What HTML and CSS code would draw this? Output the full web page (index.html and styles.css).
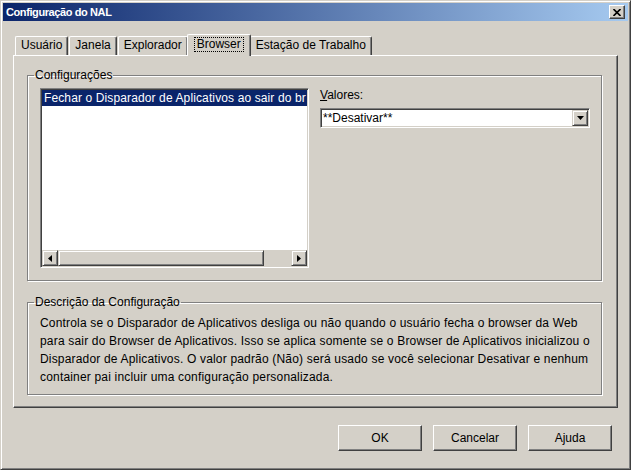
FILE: index.html
```html
<!DOCTYPE html>
<html lang="pt">
<head>
  <meta charset="UTF-8">
  <title>Configuração do NAL</title>
  <link rel="stylesheet" href="styles.css">
</head>
<body>
  <div class="window">
    <div class="titlebar">
      <span class="title">Configuração do NAL</span>
      <span class="close">
        <svg width="8" height="7" viewBox="0 0 8 7"><path d="M0.5 0 L7.5 7 M7.5 0 L0.5 7" stroke="#000" stroke-width="1.6"/></svg>
      </span>
    </div>

    <div class="content">
      <div class="tabs">
        <div class="tab">Usuário</div>
        <div class="tab">Janela</div>
        <div class="tab">Explorador</div>
        <div class="tab active"><span class="focus">Browser</span></div>
        <div class="tab">Estação de Trabalho</div>
      </div>

      <div class="panel">
        <fieldset class="group settings">
          <legend>Configurações</legend>
          <div class="settings-body">
            <div class="listbox">
              <div class="list-items">
                <div class="item selected">Fechar o Disparador de Aplicativos ao sair do br</div>
              </div>
              <div class="hscroll">
                <span class="sbtn">
                  <svg width="4" height="7" viewBox="0 0 4 7"><path d="M4 0 L0 3.5 L4 7 Z" fill="#000"/></svg>
                </span>
                <span class="thumb"></span>
                <span class="track"></span>
                <span class="sbtn">
                  <svg width="4" height="7" viewBox="0 0 4 7"><path d="M0 0 L4 3.5 L0 7 Z" fill="#000"/></svg>
                </span>
              </div>
            </div>

            <div class="values">
              <label class="values-label">Valores:</label>
              <div class="combo">
                <span class="combo-text">**Desativar**</span>
                <span class="drop">
                  <svg width="7" height="4" viewBox="0 0 7 4"><path d="M0 0 L7 0 L3.5 4 Z" fill="#000"/></svg>
                </span>
              </div>
            </div>
          </div>
        </fieldset>

        <fieldset class="group desc">
          <legend>Descrição da Configuração</legend>
          <p class="desc-text">Controla se o Disparador de Aplicativos desliga ou não quando o usuário fecha o browser da Web<br>para sair do Browser de Aplicativos. Isso se aplica somente se o Browser de Aplicativos inicializou o<br>Disparador de Aplicativos. O valor padrão (Não) será usado se você selecionar Desativar e nenhum<br>container pai incluir uma configuração personalizada.</p>
        </fieldset>
      </div>

      <div class="buttons">
        <button class="btn">OK</button>
        <button class="btn">Cancelar</button>
        <button class="btn">Ajuda</button>
      </div>
    </div>
  </div>
</body>
</html>
```

FILE: styles.css
```css
body {
  margin: 0;
  background: #d4d0c8;
  font-family: "Liberation Sans", Arial, sans-serif;
  font-size: 12px;
  color: #000;
}
.window {
  width: 631px;
  height: 470px;
  box-sizing: border-box;
  padding: 2px;
  background: #d4d0c8;
  border: 1px solid;
  border-color: #d4d0c8 #404040 #404040 #d4d0c8;
  box-shadow: inset 1px 1px 0 #fff, inset -1px -1px 0 #808080;
}
.titlebar {
  height: 18px;
  display: flex;
  align-items: center;
  justify-content: space-between;
  padding: 0 3px 0 3px;
  background: linear-gradient(to right, #0a246a, #a6caf0);
}
.title {
  color: #fff;
  font-weight: bold;
  font-size: 11px;
  letter-spacing: -0.4px;
}
.close {
  width: 16px;
  height: 14px;
  box-sizing: border-box;
  display: flex;
  align-items: center;
  justify-content: center;
  background: #d4d0c8;
  border: 1px solid;
  border-color: #fff #404040 #404040 #fff;
  box-shadow: inset -1px -1px 0 #808080;
}
.content {
  padding: 0 10px;
}
.tabs {
  display: flex;
  align-items: flex-end;
  margin-top: 13px;
  padding-left: 2px;
}
.tab {
  height: 19px;
  box-sizing: border-box;
  padding: 0 5px;
  margin-right: 1px;
  line-height: 17px;
  white-space: nowrap;
  border: 1px solid;
  border-bottom: none;
  border-color: #fff #404040 #fff #fff;
  border-radius: 2px 2px 0 0;
  box-shadow: inset -1px 0 0 #808080;
}
.tab.active {
  position: relative;
  height: 22px;
  margin: 0 -1px -1px -2px;
  padding: 0 6px;
  line-height: 18px;
  background: #d4d0c8;
}
.focus {
  display: inline-block;
  padding: 0 2px;
  line-height: 13px;
  border: 1px dotted #000;
}
.panel {
  padding: 12px 15px 12px 13px;
  border: 1px solid;
  border-color: #fff #404040 #404040 #fff;
  box-shadow: inset -1px -1px 0 #808080;
}
.group {
  margin: 0;
  padding: 0;
  border: 1px solid #808080;
  box-shadow: inset 1px 1px 0 #fff, 1px 1px 0 #fff;
}
.group legend {
  margin-left: 6px;
  padding: 0 1px;
  line-height: 14px;
}
.settings-body {
  display: flex;
  align-items: flex-start;
  padding: 6px 0 12px 12px;
}
.listbox {
  width: 269px;
  height: 180px;
  box-sizing: border-box;
  display: flex;
  flex-direction: column;
  background: #fff;
  border: 1px solid;
  border-color: #808080 #fff #fff #808080;
  box-shadow: inset 1px 1px 0 #404040, inset -1px -1px 0 #d4d0c8;
  padding: 1px;
}
.list-items {
  flex: 1;
  overflow: hidden;
}
.item {
  height: 16px;
  line-height: 16px;
  padding-left: 2px;
  white-space: nowrap;
  overflow: hidden;
  letter-spacing: 0.12px;
}
.item.selected {
  background: #0a246a;
  color: #fff;
}
.hscroll {
  display: flex;
  height: 16px;
  background: #d4d0c8;
}
.sbtn, .thumb, .drop {
  box-sizing: border-box;
  background: #d4d0c8;
  border: 1px solid;
  border-color: #d4d0c8 #404040 #404040 #d4d0c8;
  box-shadow: inset 1px 1px 0 #fff, inset -1px -1px 0 #808080;
}
.sbtn {
  width: 16px;
  display: flex;
  align-items: center;
  justify-content: center;
}
.thumb {
  width: 206px;
}
.track {
  flex: 1;
}
.values {
  margin-left: 11px;
}
.values-label {
  display: block;
  line-height: 14px;
}
.values-label::first-letter {
  text-decoration: underline;
}
.combo {
  width: 270px;
  height: 20px;
  box-sizing: border-box;
  margin-top: 6px;
  display: flex;
  align-items: center;
  justify-content: space-between;
  background: #fff;
  border: 1px solid;
  border-color: #808080 #fff #fff #808080;
  box-shadow: inset 1px 1px 0 #404040, inset -1px -1px 0 #d4d0c8;
  padding: 1px;
}
.combo-text {
  padding-left: 1px;
}
.drop {
  width: 16px;
  height: 16px;
  display: flex;
  align-items: center;
  justify-content: center;
}
.desc {
  margin-top: 14px;
}
.desc-text {
  margin: 0;
  padding: 5px 0 8px 12px;
  line-height: 18px;
  white-space: nowrap;
  letter-spacing: 0.18px;
}
.buttons {
  display: flex;
  justify-content: flex-end;
  gap: 11px;
  margin-top: 17px;
  padding-right: 6px;
}
.btn {
  width: 84px;
  height: 26px;
  font-family: "Liberation Sans", Arial, sans-serif;
  font-size: 12px;
  color: #000;
  background: #d4d0c8;
  border: 1px solid;
  border-color: #fff #404040 #404040 #fff;
  box-shadow: inset -1px -1px 0 #808080;
  padding: 0;
}
```
